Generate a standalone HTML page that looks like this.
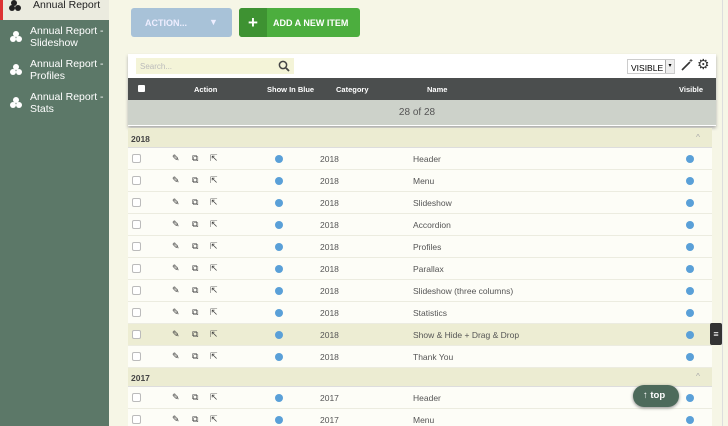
<!DOCTYPE html><html><head><style>
*{margin:0;padding:0;box-sizing:border-box}
html,body{width:728px;height:426px;overflow:hidden}
body{background:#f6f6e6;font-family:"Liberation Sans",sans-serif;position:relative}
.sb{position:absolute;left:0;top:0;width:109px;height:426px;background:#5c7868}
.sb .it{position:absolute;left:0;width:109px;color:#fff;font-size:10.5px;line-height:12px;padding-left:30px}
.ico{position:absolute;left:9px;width:14px;height:12px}
.top1{top:0;height:20px;background:#ebebdf;border-left:3px solid #d33}
.a{position:absolute}
.row{position:absolute;left:128px;width:584px;height:22px;background:#fdfdf7;border-bottom:1px solid #ecece0;font-size:8.5px;color:#555}
.row>*{position:absolute;top:6px}
.cb{left:4px;top:6px !important;width:9px;height:9px;border:1px solid #bbb;border-radius:2px;background:#fff}
.dot{width:8px;height:8px;border-radius:50%;background:#5aa0d8;top:7px !important}
.grp{position:absolute;left:128px;width:584px;height:20px;background:#ececd2;font-size:8.5px;font-weight:bold;color:#444;padding:6px 0 0 3px;border-bottom:1px solid #ddd}
.grp span{position:absolute;right:12px;top:4px;color:#aaa;font-weight:normal}
</style></head><body>
<div class="sb">
<div class="it top1" style="padding-left:30px;font-size:10.5px;line-height:10px;color:#222">Annual Report<svg class="ico" style="top:0;left:6px" viewBox="0 0 14 12"><circle cx="5" cy="3" r="3" fill="#222"/><circle cx="3" cy="8" r="3" fill="#222"/><circle cx="9" cy="8" r="3" fill="#222"/></svg></div>
<div class="it" style="top:25px">Annual Report -<br>Slideshow<svg class="ico" style="top:6px" viewBox="0 0 14 12"><circle cx="7" cy="3" r="3" fill="#fff"/><circle cx="4" cy="8" r="3" fill="#fff"/><circle cx="10" cy="8" r="3" fill="#fff"/></svg></div>
<div class="it" style="top:58px">Annual Report -<br>Profiles<svg class="ico" style="top:6px" viewBox="0 0 14 12"><circle cx="7" cy="3" r="3" fill="#fff"/><circle cx="4" cy="8" r="3" fill="#fff"/><circle cx="10" cy="8" r="3" fill="#fff"/></svg></div>
<div class="it" style="top:91px">Annual Report -<br>Stats<svg class="ico" style="top:6px" viewBox="0 0 14 12"><circle cx="7" cy="3" r="3" fill="#fff"/><circle cx="4" cy="8" r="3" fill="#fff"/><circle cx="10" cy="8" r="3" fill="#fff"/></svg></div>
</div>
<div class="a" style="left:131px;top:8px;width:101px;height:29px;background:#a8c2d8;border-radius:3px;color:#eef;font-size:9px;font-weight:bold;padding:10px 0 0 14px">ACTION...<span style="position:absolute;left:78px;top:9px;font-size:9px">▼</span></div>
<div class="a" style="left:239px;top:8px;width:121px;height:29px;background:#4cae3e;border-radius:3px;color:#fff;font-size:9px;font-weight:bold;padding:10px 0 0 34px"><div class="a" style="left:0;top:0;width:28px;height:29px;background:#3e9232;border-radius:3px 0 0 3px;font-size:17px;text-align:center;line-height:29px">+</div>ADD A NEW ITEM</div>
<div class="a" style="left:128px;top:54px;width:588px;height:72px;background:#fff;box-shadow:0 2px 3px #aaa"></div>
<div class="a" style="left:136px;top:58px;width:158px;height:16px;background:#f4f4d8;font-size:8px;color:#bbb;padding:4px 0 0 4px">Search...<svg class="a" style="left:142px;top:2px" width="12" height="12" viewBox="0 0 12 12"><circle cx="5" cy="5" r="3.6" fill="none" stroke="#444" stroke-width="1.5"/><path d="M8 8l3 3" stroke="#444" stroke-width="1.8"/></svg></div>
<div class="a" style="left:627px;top:59px;width:48px;height:15px;border:1px solid #ccc;background:#fff;font-size:8.5px;padding:3px 0 0 3px">VISIBLE<span style="position:absolute;right:0;top:0;width:9px;height:13px;background:#eee;border-left:1px solid #aaa;font-size:6px;text-align:center;line-height:13px">▾</span></div>
<svg class="a" style="left:681px;top:59px" width="12" height="12" viewBox="0 0 12 12"><path d="M1 11L9 3" stroke="#333" stroke-width="1.6"/><path d="M10 0v3M8.5 1.5h3" stroke="#333" stroke-width=".8"/></svg>
<div class="a" style="left:697px;top:56px;font-size:14px;color:#333">⚙</div>
<div class="a" style="left:128px;top:78px;width:588px;height:22px;background:#4b4e4e;color:#fff;font-size:7.5px;font-weight:bold">
<div class="a" style="left:10px;top:7px;width:7px;height:7px;background:#fff;border-radius:1px"></div>
<span class="a" style="left:66px;top:7px">Action</span><span class="a" style="left:139px;top:7px">Show In Blue</span><span class="a" style="left:208px;top:7px">Category</span><span class="a" style="left:299px;top:7px">Name</span><span class="a" style="left:551px;top:7px">Visible</span></div>
<div class="a" style="left:128px;top:100px;width:588px;height:25px;background:#cdd2ca;font-size:10px;color:#555;text-align:center;padding-top:7px;padding-right:10px">28 of 28</div>
<div class="a" style="left:722px;top:0;width:1px;height:426px;background:#ddd"></div>
<div class="grp" style="top:128px">2018<span>^</span></div>
<div class="grp" style="top:367px">2017<span>^</span></div>
<div id="rows"></div>
<script>
var names=[["Header",148],["Menu",170],["Slideshow",192],["Accordion",214],["Profiles",236],["Parallax",258],["Slideshow (three columns)",280],["Statistics",302],["Show & Hide + Drag & Drop",324],["Thank You",346],["Header",387,2017],["Menu",409,2017]];
var h="";names.forEach(function(n){var bg=n[1]==324?"background:#ededd3;":"";
h+='<div class="row" style="top:'+n[1]+'px;'+bg+'"><div class="cb"></div><span style="left:44px;top:5px;font-size:9px;color:#333">✎</span><span style="left:64px;top:5px;font-size:9px;color:#444">⧉</span><span style="left:82px;top:5px;font-size:9px;color:#444">⇱</span><div class="dot" style="left:147px"></div><span style="left:192px">'+(n[2]||2018)+'</span><span class="nm" style="left:285px"></span><div class="dot" style="left:558px"></div></div>';});
document.getElementById("rows").innerHTML=h;
var els=document.querySelectorAll(".nm");for(var i=0;i<els.length;i++)els[i].textContent=names[i][0];
</script>
<div class="a" style="left:710px;top:323px;width:12px;height:22px;background:#333;border-radius:2px;color:#fff;font-size:9px;text-align:center;line-height:22px">≡</div>
<div class="a" style="left:633px;top:385px;width:46px;height:22px;background:#4d6a5b;border-radius:11px;color:#fff;font-size:9.5px;font-weight:bold;padding:5px 0 0 10px;box-shadow:0 1px 3px #888">↑ top</div>
</body></html>
